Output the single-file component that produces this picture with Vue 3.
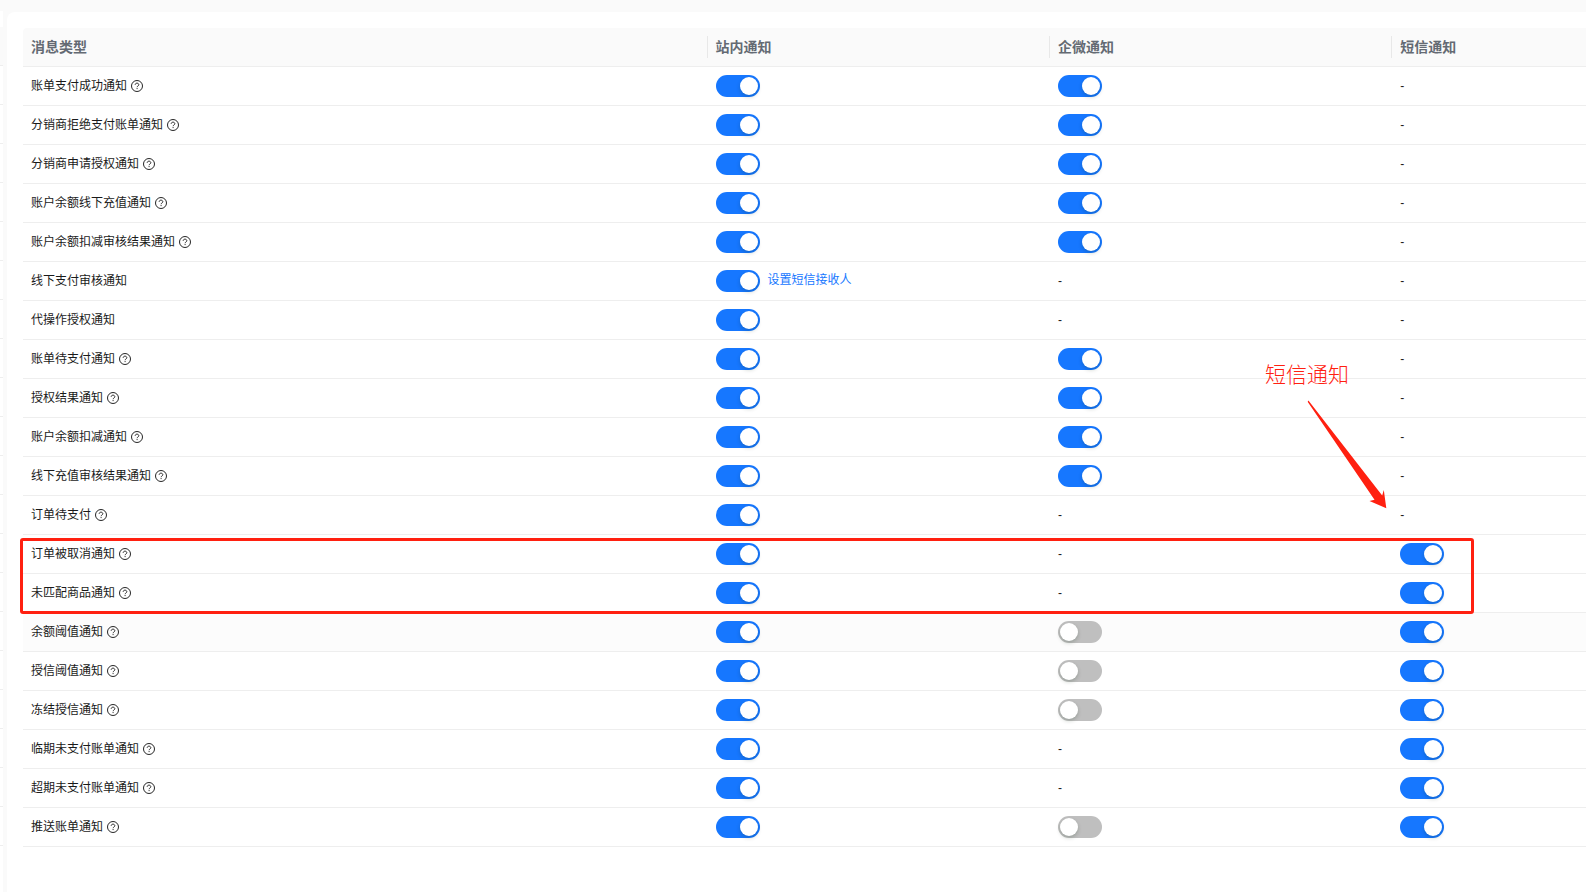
<script setup>
import { reactive } from 'vue'

const columns = [
  { key: 'site', title: '站内通知' },
  { key: 'wecom', title: '企微通知' },
  { key: 'sms', title: '短信通知' }
]

// true / false: switch state, null: channel not available
const rows = reactive([
  { name: '账单支付成功通知', help: true, site: true, wecom: true, sms: null },
  { name: '分销商拒绝支付账单通知', help: true, site: true, wecom: true, sms: null },
  { name: '分销商申请授权通知', help: true, site: true, wecom: true, sms: null },
  { name: '账户余额线下充值通知', help: true, site: true, wecom: true, sms: null },
  { name: '账户余额扣减审核结果通知', help: true, site: true, wecom: true, sms: null },
  { name: '线下支付审核通知', help: false, site: true, wecom: null, sms: null, link: '设置短信接收人' },
  { name: '代操作授权通知', help: false, site: true, wecom: null, sms: null },
  { name: '账单待支付通知', help: true, site: true, wecom: true, sms: null },
  { name: '授权结果通知', help: true, site: true, wecom: true, sms: null },
  { name: '账户余额扣减通知', help: true, site: true, wecom: true, sms: null },
  { name: '线下充值审核结果通知', help: true, site: true, wecom: true, sms: null },
  { name: '订单待支付', help: true, site: true, wecom: null, sms: null },
  { name: '订单被取消通知', help: true, site: true, wecom: null, sms: true },
  { name: '未匹配商品通知', help: true, site: true, wecom: null, sms: true },
  { name: '余额阈值通知', help: true, site: true, wecom: false, sms: true, active: true },
  { name: '授信阈值通知', help: true, site: true, wecom: false, sms: true },
  { name: '冻结授信通知', help: true, site: true, wecom: false, sms: true },
  { name: '临期未支付账单通知', help: true, site: true, wecom: null, sms: true },
  { name: '超期未支付账单通知', help: true, site: true, wecom: null, sms: true },
  { name: '推送账单通知', help: true, site: true, wecom: false, sms: true }
])
</script>

<template>
  <div class="page">
    <aside class="side">
      <div class="side-head"></div>
      <div v-for="row in rows" :key="row.name" class="side-row"></div>
    </aside>

    <main class="panel">
      <table class="table">
        <colgroup>
          <col class="col-name" />
          <col class="col-channel" />
          <col class="col-channel" />
          <col />
        </colgroup>
        <thead>
          <tr>
            <th scope="col">消息类型</th>
            <th v-for="col in columns" :id="`col-${col.key}`" :key="col.key" scope="col" class="divided">
              {{ col.title }}
            </th>
          </tr>
        </thead>
        <tbody>
          <tr v-for="(row, i) in rows" :key="row.name" :class="{ active: row.active }">
            <td>
              <div class="cell name">
                <span :id="`row-${i}`">{{ row.name }}</span>
                <svg v-if="row.help" class="help" viewBox="0 0 24 24" aria-hidden="true">
                  <circle cx="12" cy="12" r="11" />
                  <path d="M8.4 9.6c0-2 1.6-3.3 3.6-3.3s3.6 1.3 3.6 3.2c0 2.4-3.4 2.5-3.4 4.9" />
                  <path d="M12.2 16.2v2" />
                </svg>
              </div>
            </td>
            <td v-for="col in columns" :key="col.key">
              <div class="cell">
                <span v-if="row[col.key] === null" class="dash">-</span>
                <input
                  v-else
                  v-model="row[col.key]"
                  class="switch"
                  type="checkbox"
                  role="switch"
                  :aria-labelledby="`row-${i} col-${col.key}`"
                />
                <a v-if="row.link && col.key === 'site'" class="link" href="#">{{ row.link }}</a>
              </div>
            </td>
          </tr>
        </tbody>
      </table>

      <div class="mark-box"></div>
      <div class="mark-text">短信通知</div>
      <svg class="mark-arrow" viewBox="0 0 80 110" aria-hidden="true">
        <path d="M1 0.6L2 1.2L75.2 95.6L76.8 90L79.3 108.3L62.5 101L67.5 99.8L0.8 2Z" />
      </svg>
    </main>
  </div>
</template>

<style>
body {
  margin: 0;
  background: #fafafa;
}
</style>

<style scoped>
.page {
  display: flex;
  gap: 4px;
  min-height: 100vh;
  box-sizing: border-box;
  overflow: hidden;
  background: #fafafa;
  font-family: "Liberation Sans", "Noto Sans CJK SC", sans-serif;
  font-size: 12px;
  line-height: 20px;
  color: #1a1a1a;
}

.side {
  flex: none;
  width: 3px;
  margin-top: 11px;
  padding-top: 16px;
  background: #fff;
}

.side-head,
.side-row {
  height: 38px;
  border-bottom: 1px solid #eee;
}

.side-head {
  background: #fafafa;
}

.panel {
  position: relative;
  flex: 1;
  min-width: 0;
  margin-top: 12px;
  padding: 16px 0 16px 16px;
  border-radius: 8px 0 0 0;
  background: #fff;
}

.table {
  width: 100%;
  table-layout: fixed;
  border-collapse: separate;
  border-spacing: 0;
}

.col-name {
  width: 43.8%;
}

.col-channel {
  width: 21.9%;
}

th {
  position: relative;
  height: 38px;
  padding: 0 8px;
  border-bottom: 1px solid #eee;
  background: #fafafa;
  color: #646a73;
  font-size: 14px;
  font-weight: 600;
  text-align: left;
}

th:first-child {
  border-top-left-radius: 4px;
}

.divided::before {
  content: "";
  position: absolute;
  left: -1px;
  top: 8px;
  bottom: 8px;
  width: 1px;
  background: #e8e8e8;
}

td {
  padding: 0 8px;
  border-bottom: 1px solid #eee;
}

.active td {
  background: #fcfcfc;
}

.cell {
  display: flex;
  align-items: center;
  gap: 8px;
  height: 38px;
}

.name {
  gap: 4px;
}

.help {
  width: 12px;
  height: 12px;
  fill: none;
  stroke: #262626;
  stroke-width: 2;
}

.switch {
  appearance: none;
  flex: none;
  width: 44px;
  height: 22px;
  margin: 0;
  padding: 2px;
  box-sizing: border-box;
  border-radius: 11px;
  background: #bfbfbf;
  cursor: pointer;
}

.switch::before {
  content: "";
  display: block;
  width: 18px;
  height: 18px;
  border-radius: 50%;
  background: #fff;
  box-shadow: 0 2px 4px rgba(0, 35, 11, 0.2);
}

.switch:checked {
  background: #1677ff;
}

.switch:checked::before {
  margin-left: auto;
}

.link {
  padding-bottom: 2px;
  color: #1677ff;
  text-decoration: none;
}

.mark-box {
  position: absolute;
  left: 13px;
  top: 526px;
  width: 1448px;
  height: 70px;
  border: 3px solid #ff2010;
  border-radius: 3px;
  pointer-events: none;
}

.mark-text {
  position: absolute;
  left: 1258px;
  top: 348px;
  color: #ff2010;
  font-size: 21px;
  font-weight: 300;
  line-height: 30px;
}

.mark-arrow {
  position: absolute;
  left: 1300px;
  top: 388px;
  width: 80px;
  height: 110px;
  fill: #ff2010;
  pointer-events: none;
}
</style>
